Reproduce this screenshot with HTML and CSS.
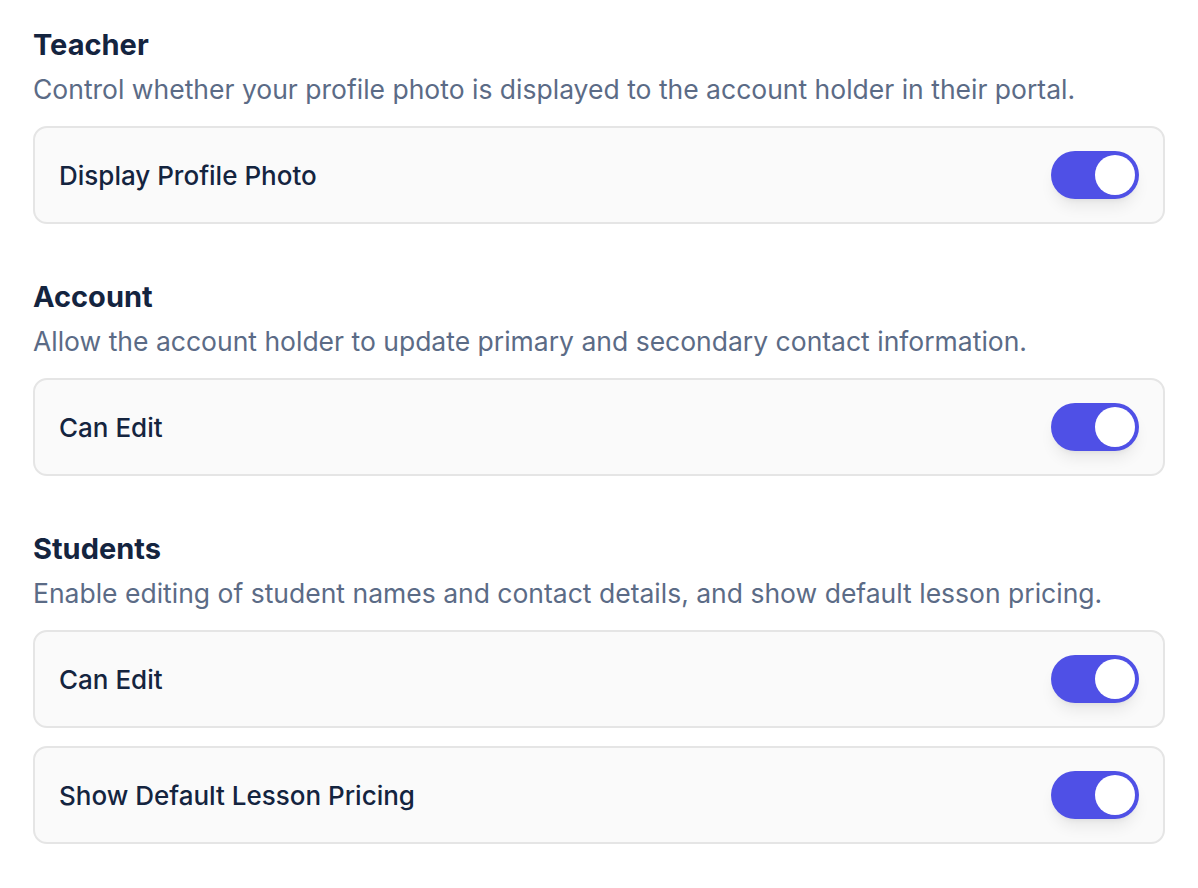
FILE: index.html
```html
<!DOCTYPE html>
<html lang="en">
<head>
    <meta charset="UTF-8">
    <meta name="viewport" content="width=device-width, initial-scale=1.0">
    <title>Portal Settings</title>
    <link rel="stylesheet" href="styles.css">
</head>
<body>

    <div class="settings">
        <section class="section">
            <h2>Teacher</h2>
            <p class="desc">Control whether your profile photo is displayed to the account holder in their portal.</p>
            <div class="option">
                <span class="label">Display Profile Photo</span>
                <span class="toggle on"><span class="knob"></span></span>
            </div>
        </section>

        <section class="section">
            <h2>Account</h2>
            <p class="desc">Allow the account holder to update primary and secondary contact information.</p>
            <div class="option">
                <span class="label">Can Edit</span>
                <span class="toggle on"><span class="knob"></span></span>
            </div>
        </section>

        <section class="section">
            <h2>Students</h2>
            <p class="desc">Enable editing of student names and contact details, and show default lesson pricing.</p>
            <div class="option">
                <span class="label">Can Edit</span>
                <span class="toggle on"><span class="knob"></span></span>
            </div>
            <div class="option">
                <span class="label">Show Default Lesson Pricing</span>
                <span class="toggle on"><span class="knob"></span></span>
            </div>
        </section>
    </div>

</body>
</html>
```

FILE: styles.css
```css
body {
    margin: 0;
    padding: 0;
    background-color: #ffffff;
    font-family: Inter, 'Noto Sans', sans-serif;
    color: #14243f;
}
.settings {
    padding: 27px 33px 0;
    display: flex;
    flex-direction: column;
    gap: 55px;
}
.section {
    display: flex;
    flex-direction: column;
    gap: 18px;
}
h2 {
    margin: 0;
    font-size: 29px;
    line-height: 36px;
    font-weight: 700;
    color: #14243f;
}
.desc {
    margin: -8px 0 3px;
    font-size: 26.5px;
    line-height: 32px;
    color: #5b6b86;
}
.option {
    height: 94px;
    display: flex;
    align-items: center;
    justify-content: space-between;
    padding: 0 24px;
    background-color: #fafafa;
    border: 2px solid #e5e5e5;
    border-radius: 14px;
}
.label {
    font-size: 26px;
    font-weight: 500;
    color: #14243f;
}
.toggle {
    width: 88px;
    height: 48px;
    border-radius: 24px;
    background-color: #4f50e6;
    display: flex;
    align-items: center;
    padding: 4px;
    box-sizing: border-box;
    box-shadow: 0 10px 15px -3px rgba(0, 0, 0, 0.08), 0 4px 6px -4px rgba(0, 0, 0, 0.08);
}
.toggle.on {
    justify-content: flex-end;
}
.knob {
    width: 40px;
    height: 40px;
    border-radius: 50%;
    background-color: #ffffff;
}
```
